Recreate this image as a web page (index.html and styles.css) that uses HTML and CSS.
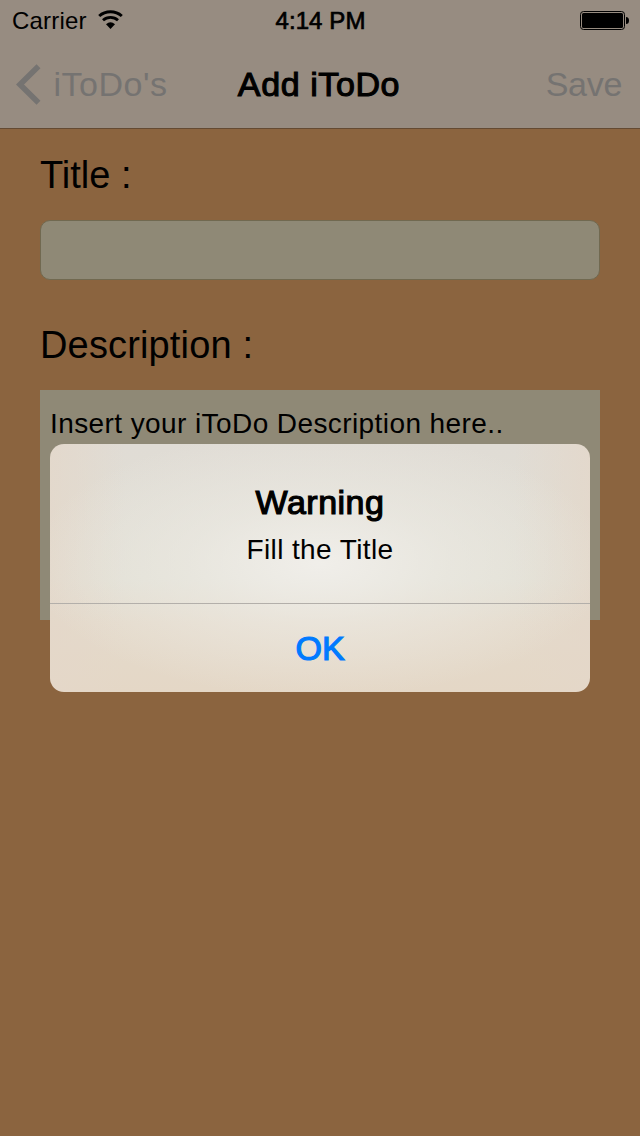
FILE: index.html
```
<!DOCTYPE html>
<html lang="en">
<head>
<meta charset="utf-8">
<title>Add iToDo</title>
<link rel="stylesheet" href="styles.css">
</head>
<body>
<div class="screen">
  <header class="header">
    <div class="status">
      <div class="status-left">
        <span class="carrier">Carrier</span>
        <svg class="wifi" width="25" height="19" viewBox="0 0 25 19">
          <path d="M1.2 6A16.5 15.5 0 0 1 23.8 6" fill="none" stroke="#000" stroke-width="3"/>
          <path d="M5 10.3A11 11 0 0 1 20 10.3" fill="none" stroke="#000" stroke-width="2.8"/>
          <path d="M8 14.2Q12.5 10.2 17 14.2L12.5 18.9Z"/>
        </svg>
      </div>
      <span class="time">4:14 PM</span>
      <svg class="battery" width="49" height="19" viewBox="0 0 49 19">
        <rect x=".5" y=".5" width="44" height="18" rx="3" fill="none" stroke="#000"/>
        <rect x="2" y="2" width="41" height="15" rx="1.5"/>
        <path d="M46 6Q49 6 49 9.5Q49 13 46 13Z"/>
      </svg>
    </div>
    <nav class="nav">
      <div class="back">
        <svg width="25" height="41" viewBox="0 0 25 41"><path d="M22.5 2.2L4 20.5L22.5 38.8" fill="none" stroke="#757371" stroke-width="5.6"/></svg>
        <span class="back-label">iToDo's</span>
      </div>
      <span class="nav-title">Add iToDo</span>
      <span class="save">Save</span>
    </nav>
  </header>
  <main class="form">
    <label class="label title-label">Title :</label>
    <div class="field"></div>
    <label class="label description-label">Description :</label>
    <div class="textarea"><span class="hint">Insert your iToDo Description here..</span></div>
  </main>
  <section class="alert">
    <div class="alert-body">
      <div class="alert-title">Warning</div>
      <div class="alert-message">Fill the Title</div>
    </div>
    <div class="alert-button"><span class="ok">OK</span></div>
  </section>
</div>
</body>
</html>
```
FILE: styles.css
```
* { box-sizing: border-box; }
body { margin: 0; }
.screen {
  position: relative;
  width: 640px;
  height: 1136px;
  overflow: hidden;
  background: #8b643f;
  color: #000;
  font-family: "Liberation Sans", Arial, sans-serif;
  white-space: nowrap;
}
svg { display: block; }
.header {
  height: 129px;
  background: #978c81;
  border-bottom: 1px solid #644a32;
}
.status {
  display: grid;
  grid-template-columns: 1fr auto 1fr;
  height: 40px;
  padding: 1px 11px 0 12px;
  font-size: 24px;
  line-height: 40px;
}
.status-left { display: flex; gap: 11px; }
.carrier { letter-spacing: 0.2px; }
.wifi { margin-top: 9px; }
.time { letter-spacing: 0.1px; -webkit-text-stroke: 0.7px #000; }
.battery { justify-self: end; margin-top: 10px; }
.nav {
  display: grid;
  grid-template-columns: 1fr auto 1fr;
  height: 88px;
  padding: 0 18px 0 16px;
  font-size: 34px;
  line-height: 88px;
}
.back { display: flex; align-items: center; gap: 12.5px; color: #757371; }
.back-label { letter-spacing: 0.5px; }
.nav-title { letter-spacing: 0.6px; -webkit-text-stroke: 1.1px #000; }
.save { justify-self: end; letter-spacing: -0.3px; color: #757371; }
.form { padding: 26px 40px 0; }
.label { display: block; font-size: 38px; line-height: 40px; }
.field {
  height: 60px;
  margin-top: 25px;
  background: #8f8976;
  border: 1px solid #716950;
  border-radius: 10px;
}
.description-label { margin-top: 45px; letter-spacing: 0.15px; }
.textarea {
  height: 230px;
  margin-top: 25px;
  padding: 14px 10px;
  background: #8f8976;
  font-size: 28px;
  line-height: 40px;
}
.hint { letter-spacing: 0.41px; }
.alert {
  position: absolute;
  left: 50px;
  top: 444px;
  width: 540px;
  height: 248px;
  border-radius: 14px;
  text-align: center;
  background:
    radial-gradient(ellipse 290px 135px at 50% 48%, rgba(242,240,236,.9), rgba(238,236,230,.55) 45%, rgba(232,228,218,0)),
    linear-gradient(90deg, rgba(228,215,201,.75), rgba(228,218,202,0) 14%, rgba(228,218,202,0) 86%, rgba(228,215,201,.75)),
    linear-gradient(#e0dcd5, #e1dfd4 55%, #e4dacb 72%, #e4d7c6);
}
.alert-body {
  height: 160px;
  padding-top: 38px;
  border-bottom: 1px solid #b3afaa;
}
.alert-title { font-size: 34px; line-height: 40px; letter-spacing: 0.5px; -webkit-text-stroke: 1.2px #000; }
.alert-message { margin-top: 8px; font-size: 28px; line-height: 40px; letter-spacing: 0.4px; }
.alert-button { color: #007aff; font-size: 34px; line-height: 88px; -webkit-text-stroke: 1.2px #007aff; }
```
